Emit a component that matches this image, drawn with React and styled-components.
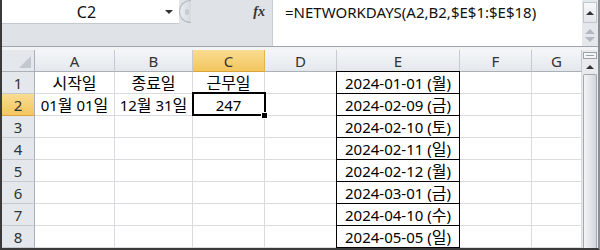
import React from 'react';
import styled, { createGlobalStyle } from 'styled-components';

const GlobalStyle = createGlobalStyle`
  html, body {
    margin: 0;
    padding: 0;
    background: #ffffff;
  }
  body {
    font-family: "Noto Sans", "Noto Sans CJK KR", sans-serif;
    color: #000;
  }
`;

const Window = styled.div`
  width: 600px;
  height: 250px;
  box-sizing: border-box;
  border-left: 2px solid #3a3a3a;
  border-right: 2px solid #8a8f96;
  border-bottom: 2px solid #3a3a3a;
  display: flex;
  flex-direction: column;
  overflow: hidden;
  background: #fff;
`;

const Toolbar = styled.div`
  height: 46px;
  flex: none;
  display: flex;
  align-items: flex-start;
  background: #dfe3e8;
  border-bottom: 1px solid #9fa5ac;
`;

const NameBox = styled.div`
  width: 177px;
  height: 24px;
  box-sizing: border-box;
  background: #fff;
  border-bottom: 1px solid #c4c9cf;
  display: flex;
  align-items: center;
  font-size: 16px;
  color: #111;
`;

const NameText = styled.span`
  flex: 1;
  text-align: center;
  padding-left: 6px;
`;

const DropArrow = styled.span`
  width: 0;
  height: 0;
  margin-right: 6px;
  border-left: 4px solid transparent;
  border-right: 4px solid transparent;
  border-top: 4px solid #333;
`;

const Grip = styled.div`
  width: 12px;
  height: 23px;
  box-sizing: border-box;
  border-radius: 12px 0 0 12px;
  border: 1px solid #b4bac1;
  border-right: none;
  background: linear-gradient(90deg, #e9ecef, #d5d9de);
  display: flex;
  align-items: center;
  justify-content: center;
  &::after {
    content: '';
    width: 4px;
    height: 6px;
    margin-left: 2px;
    border-radius: 2px;
    background: #c6cbd1;
  }
`;

const FxButton = styled.div`
  width: 81px;
  height: 24px;
  display: flex;
  align-items: center;
  justify-content: flex-end;
  padding-right: 7px;
  box-sizing: border-box;
  font-family: "Liberation Serif", "DejaVu Serif", serif;
  font-style: italic;
  font-weight: bold;
  font-size: 14px;
  color: #333;
`;

const FormulaBox = styled.div`
  flex: 1;
  height: 46px;
  box-sizing: border-box;
  background: #fff;
  border-left: 1px solid #c8cdd3;
  padding: 2px 0 0 12px;
  font-size: 15px;
  line-height: 20px;
  color: #111;
`;

const FormulaScroll = styled.div`
  width: 16px;
  height: 46px;
  flex: none;
  background: #e4e7eb;
  display: flex;
  flex-direction: column;
  align-items: center;
`;

const ScrollButton = styled.div`
  width: 14px;
  height: ${(p) => p.$h}px;
  box-sizing: border-box;
  margin-top: ${(p) => p.$mt || 0}px;
  border: 1px solid ${(p) => (p.$flat ? 'transparent' : '#c3c8ce')};
  background: ${(p) => (p.$flat ? 'transparent' : 'linear-gradient(#f6f7f9, #e3e6ea)')};
  display: flex;
  flex-direction: column;
  align-items: center;
  justify-content: center;
  gap: 3px;
`;

const Arrow = styled.span`
  width: 0;
  height: 0;
  border-left: ${(p) => p.$size}px solid transparent;
  border-right: ${(p) => p.$size}px solid transparent;
  ${(p) => (p.$down ? 'border-top' : 'border-bottom')}: ${(p) => p.$size}px solid ${(p) => p.$color};
`;

const Gap = styled.div`
  height: 3px;
  flex: none;
  background: #f1f3f5;
`;

const Body = styled.div`
  flex: 1;
  display: flex;
  min-height: 0;
`;

const Sheet = styled.div`
  width: 580px;
  display: grid;
  grid-template-columns: ${(p) => p.$cols};
  grid-auto-rows: 22px;
  font-size: 15px;
`;

const Corner = styled.div`
  position: relative;
  box-sizing: border-box;
  background: #e4e8ed;
  border-right: 1px solid #a9b0b8;
  border-bottom: 1px solid #a9b0b8;
  &::after {
    content: '';
    position: absolute;
    right: 3px;
    bottom: 3px;
    width: 12px;
    height: 12px;
    background: #c3c8ce;
    clip-path: polygon(100% 0, 100% 100%, 0 100%);
  }
`;

const ColHeader = styled.div`
  box-sizing: border-box;
  display: flex;
  align-items: center;
  justify-content: center;
  padding-top: 1px;
  background: ${(p) =>
    p.$active ? 'linear-gradient(#f9dc92, #f3c65e)' : 'linear-gradient(#f4f6f8, #e4e8ed)'};
  border-right: 1px solid ${(p) => (p.$active ? '#e2b44a' : '#c5cad0')};
  border-bottom: 1px solid ${(p) => (p.$active ? '#d9a53a' : '#a9b0b8')};
  color: #333;
  white-space: nowrap;
  overflow: hidden;
`;

const RowHeader = styled.div`
  box-sizing: border-box;
  display: flex;
  align-items: center;
  justify-content: center;
  padding-top: 1px;
  background: ${(p) => (p.$active ? 'linear-gradient(#f9dc92, #f3c65e)' : '#e4e8ed')};
  border-right: 1px solid #a9b0b8;
  border-bottom: 1px solid ${(p) => (p.$active ? '#d9a53a' : '#c5cad0')};
  color: #333;
`;

const Cell = styled.div`
  position: relative;
  box-sizing: border-box;
  display: flex;
  align-items: center;
  justify-content: center;
  white-space: nowrap;
  border-right: 1px solid ${(p) => (p.$boxed ? '#000' : '#d9dbde')};
  border-bottom: 1px solid ${(p) => (p.$boxed ? '#000' : '#d9dbde')};
  ${(p) => p.$boxed && 'box-shadow: -1px 0 0 #000, 0 -1px 0 #000, -1px -1px 0 #000;'}
  ${(p) =>
    p.$selected &&
    `
    &::before {
      content: '';
      position: absolute;
      left: -1px;
      top: -2px;
      right: -2px;
      bottom: -1px;
      border: 2px solid #000;
      z-index: 2;
    }
    &::after {
      content: '';
      position: absolute;
      right: -4px;
      bottom: -4px;
      width: 5px;
      height: 5px;
      background: #000;
      border: 1px solid #fff;
      z-index: 3;
    }
  `}
`;

const CellContent = styled.span`
  display: block;
  height: 20px;
  line-height: 20px;
  white-space: pre;
`;

const Hangul = styled.span`
  font-family: "Noto Sans CJK KR", sans-serif;
  font-size: 16px;
  line-height: 20px;
  vertical-align: top;
  position: relative;
  top: -0.5px;
`;

const VScroll = styled.div`
  width: 16px;
  flex: none;
  display: flex;
  flex-direction: column;
  align-items: center;
  background: #e8eaee;
`;

const SplitBox = styled.div`
  width: 14px;
  height: 7px;
  margin-top: 2px;
  box-sizing: border-box;
  border: 1px solid #9aa1a9;
  background: #f4f5f7;
  display: flex;
  align-items: center;
  justify-content: center;
  &::after {
    content: '';
    width: 8px;
    height: 1px;
    background: #9aa1a9;
  }
`;

const UpButton = styled.div`
  height: 15px;
  display: flex;
  align-items: center;
  justify-content: center;
`;

const Thumb = styled.div`
  flex: 1;
  width: 14px;
  box-sizing: border-box;
  border: 1px solid #a3a9b1;
  border-bottom: none;
  border-radius: 2px 2px 0 0;
  background: linear-gradient(90deg, #f3f4f6, #e0e3e7 60%, #d2d6db);
`;

const columns = [
  { key: 'A', width: 80 },
  { key: 'B', width: 78 },
  { key: 'C', width: 72 },
  { key: 'D', width: 72 },
  { key: 'E', width: 123 },
  { key: 'F', width: 72 },
  { key: 'G', width: 50 },
];

const holidays = [
  '2024-01-01 (월)',
  '2024-02-09 (금)',
  '2024-02-10 (토)',
  '2024-02-11 (일)',
  '2024-02-12 (월)',
  '2024-03-01 (금)',
  '2024-04-10 (수)',
  '2024-05-05 (일)',
];

const values = {
  A1: '시작일',
  B1: '종료일',
  C1: '근무일',
  A2: '01월 01일',
  B2: '12월 31일',
  C2: '247',
};

const selected = { col: 'C', row: 2 };

// Hangul is drawn a little larger than the digits, as in the sheet font
function CellText({ text }) {
  if (!text) return null;
  return (
    <CellContent>
      {text
        .split(/([\uAC00-\uD7A3]+)/)
        .filter(Boolean)
        .map((part, i) =>
          /[\uAC00-\uD7A3]/.test(part) ? <Hangul key={i}>{part}</Hangul> : part
        )}
    </CellContent>
  );
}

export default function App() {
  const cols = `33px ${columns.map((c) => `${c.width}px`).join(' ')}`;

  return (
    <>
      <GlobalStyle />
      <Window>
        <Toolbar>
          <NameBox>
            <NameText>C2</NameText>
            <DropArrow />
          </NameBox>
          <Grip />
          <FxButton>fx</FxButton>
          <FormulaBox>=NETWORKDAYS(A2,B2,$E$1:$E$18)</FormulaBox>
          <FormulaScroll>
            <ScrollButton $h={21} $mt={2}>
              <Arrow $size={4} $color="#333" />
            </ScrollButton>
            <ScrollButton $h={18} $mt={3} $flat>
              <Arrow $size={5} $color="#b3b8be" />
              <Arrow $size={5} $color="#b3b8be" $down />
            </ScrollButton>
          </FormulaScroll>
        </Toolbar>
        <Gap />
        <Body>
          <Sheet $cols={cols}>
            <Corner />
            {columns.map((c) => (
              <ColHeader key={c.key} $active={c.key === selected.col}>
                {c.key}
              </ColHeader>
            ))}
            {holidays.map((date, i) => {
              const row = i + 1;
              return (
                <React.Fragment key={row}>
                  <RowHeader $active={row === selected.row}>{row}</RowHeader>
                  {columns.map((c) => (
                    <Cell
                      key={c.key}
                      $boxed={c.key === 'E'}
                      $selected={c.key === selected.col && row === selected.row}
                    >
                      <CellText text={c.key === 'E' ? date : values[`${c.key}${row}`]} />
                    </Cell>
                  ))}
                </React.Fragment>
              );
            })}
          </Sheet>
          <VScroll>
            <SplitBox />
            <UpButton>
              <Arrow $size={4} $color="#333" />
            </UpButton>
            <Thumb />
          </VScroll>
        </Body>
      </Window>
    </>
  );
}
